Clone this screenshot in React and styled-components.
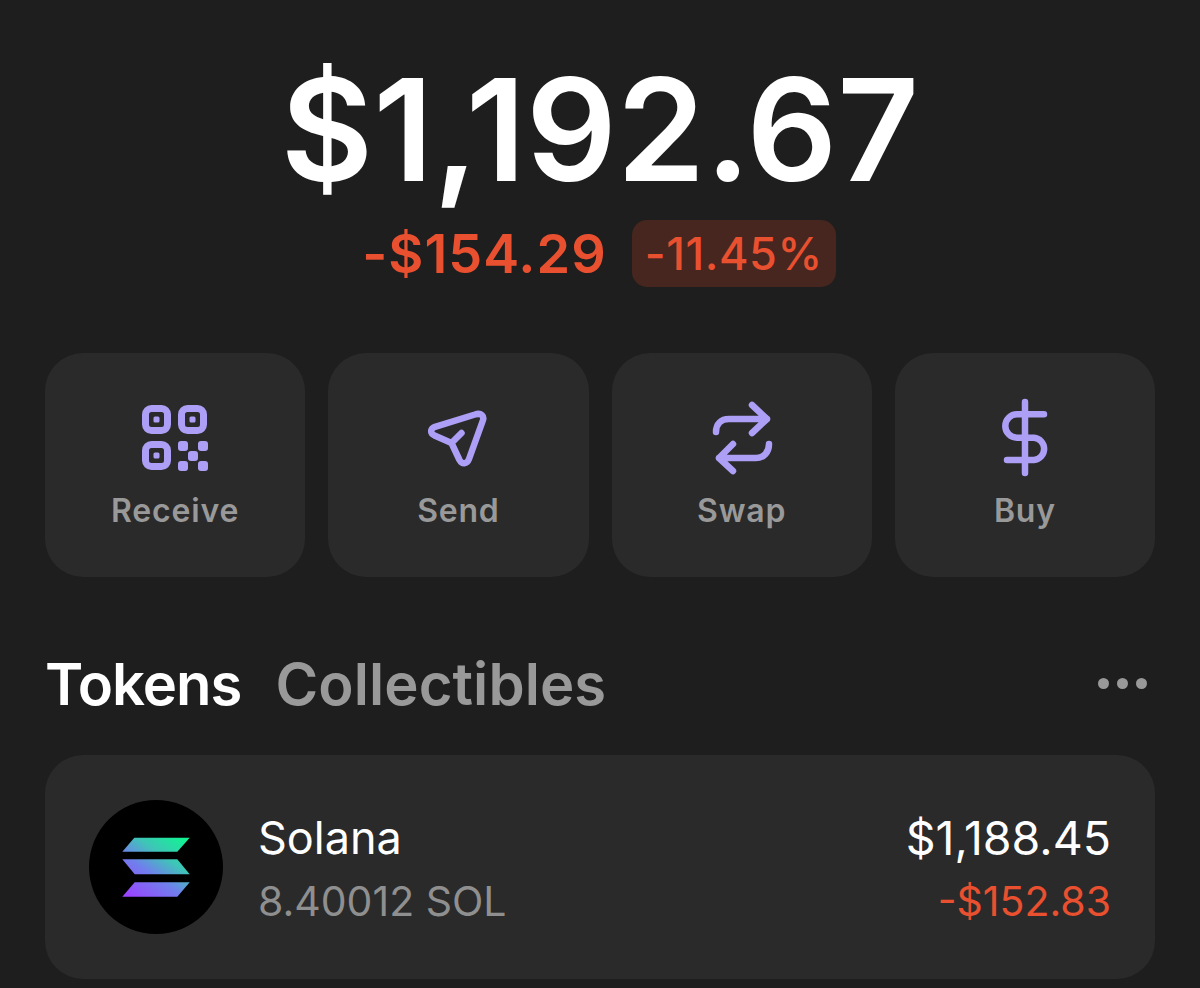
import styled, { createGlobalStyle } from "styled-components";

const GlobalStyle = createGlobalStyle`
  html, body {
    margin: 0;
    padding: 0;
    background: #1e1e1e;
  }
  * {
    box-sizing: border-box;
  }
`;

const actions = [
  { label: "Receive", icon: <QrIcon /> },
  { label: "Send", icon: <SendIcon /> },
  { label: "Swap", icon: <SwapIcon /> },
  { label: "Buy", icon: <DollarIcon /> },
];

export default function App() {
  return (
    <Page>
      <GlobalStyle />
      <Balance>$1,192.67</Balance>
      <ChangeRow>
        <ChangeAmount>-$154.29</ChangeAmount>
        <ChangeBadge>-11.45%</ChangeBadge>
      </ChangeRow>
      <Actions>
        {actions.map((action) => (
          <ActionCard key={action.label}>
            <IconSlot>{action.icon}</IconSlot>
            <ActionLabel>{action.label}</ActionLabel>
          </ActionCard>
        ))}
      </Actions>
      <TabsRow>
        <Tab $active>Tokens</Tab>
        <Tab>Collectibles</Tab>
        <MoreDots>
          <Dot />
          <Dot />
          <Dot />
        </MoreDots>
      </TabsRow>
      <TokenCard>
        <SolanaLogo />
        <TokenText>
          <TokenName>Solana</TokenName>
          <TokenSub>8.40012 SOL</TokenSub>
        </TokenText>
        <TokenValues>
          <TokenValue>$1,188.45</TokenValue>
          <TokenLoss>-$152.83</TokenLoss>
        </TokenValues>
      </TokenCard>
    </Page>
  );
}

function QrIcon() {
  return (
    <svg width="66" height="66" viewBox="0 0 66 66" fill="none">
      <g stroke="#ad9ff6" strokeWidth="7">
        <rect x="3.5" y="3.5" width="22" height="22" rx="6" />
        <rect x="39.5" y="3.5" width="22" height="22" rx="6" />
        <rect x="3.5" y="39.5" width="22" height="22" rx="6" />
      </g>
      <g fill="#ad9ff6">
        <rect x="11.5" y="11.5" width="6" height="6" rx="1.5" />
        <rect x="47.5" y="11.5" width="6" height="6" rx="1.5" />
        <rect x="11.5" y="47.5" width="6" height="6" rx="1.5" />
        <rect x="36" y="36" width="10" height="10" rx="3" />
        <rect x="56" y="36" width="10" height="10" rx="3" />
        <rect x="46" y="46" width="10" height="10" rx="3" />
        <rect x="36" y="56" width="10" height="10" rx="3" />
        <rect x="56" y="56" width="10" height="10" rx="3" />
      </g>
    </svg>
  );
}

function SendIcon() {
  return (
    <svg width="60" height="60" viewBox="0 0 60 60" fill="none">
      <path
        d="M47 6.5C53 4.5 57 8 54.5 13.5L41 51C39 56.5 34 56.5 31.5 52L23.5 35L6.5 27.5C2 25 2 21 7 18.8ZM23.5 35L33.5 25"
        stroke="#ad9ff6"
        strokeWidth="6.5"
        strokeLinecap="round"
        strokeLinejoin="round"
      />
    </svg>
  );
}

function SwapIcon() {
  return (
    <svg width="62" height="74" viewBox="0 0 62 74" fill="none">
      <path
        d="M5 31C5 23 10 18 18 18H56M41 4L56 18L41 32M58 43C58 51 53 57 45 57H8M22 43L8 57L22 70"
        stroke="#ad9ff6"
        strokeWidth="6.5"
        strokeLinecap="round"
        strokeLinejoin="round"
      />
    </svg>
  );
}

function DollarIcon() {
  return (
    <svg width="50" height="80" viewBox="0 0 50 80" fill="none">
      <path
        d="M25 4V75M44 16.3H17A11.7 11.7 0 0 0 17 39.7H34A11.2 11.2 0 0 1 34 62H7"
        stroke="#ad9ff6"
        strokeWidth="6.5"
        strokeLinecap="round"
        strokeLinejoin="round"
      />
    </svg>
  );
}

function SolanaLogo() {
  return (
    <svg width="134" height="134" viewBox="0 0 134 134" style={{ flexShrink: 0 }}>
      <defs>
        <linearGradient id="sol" gradientUnits="userSpaceOnUse" x1="44" y1="98" x2="88" y2="36">
          <stop offset="0" stopColor="#9945ff" />
          <stop offset="0.4" stopColor="#6f80ec" />
          <stop offset="0.68" stopColor="#3fc4b8" />
          <stop offset="1" stopColor="#14f195" />
        </linearGradient>
      </defs>
      <circle cx="67" cy="67" r="67" fill="#000" />
      <path
        fill="url(#sol)"
        d="M33.3 51.7L45.3 37.7H100.7L88.3 51.7ZM33.3 59.3H88.3L100.7 74.3H45.7ZM33.3 96.7L45.7 82.3H100.7L88.3 96.7Z"
      />
    </svg>
  );
}

const Page = styled.div`
  width: 1200px;
  height: 988px;
  overflow: hidden;
  padding: 0 45px;
  background: #1e1e1e;
  font-family: Inter, "Liberation Sans", sans-serif;
`;

const Balance = styled.div`
  height: 214px;
  padding-top: 42px;
  font-size: 142px;
  line-height: 174px;
  font-weight: 600;
  color: #fff;
  text-align: center;
`;

const ChangeRow = styled.div`
  display: flex;
  justify-content: center;
  align-items: center;
  gap: 25px;
  height: 67px;
  margin-top: 6px;
`;

const ChangeAmount = styled.span`
  font-size: 54px;
  font-weight: 600;
  letter-spacing: 1px;
  color: #e9502f;
`;

const ChangeBadge = styled.span`
  display: flex;
  align-items: center;
  height: 67px;
  margin-right: 2px;
  padding: 0 13px;
  border-radius: 15px;
  background: #46261f;
  font-size: 45px;
  font-weight: 500;
  letter-spacing: 0.6px;
  color: #e9502f;
`;

const Actions = styled.div`
  display: grid;
  grid-template-columns: repeat(4, 1fr);
  gap: 23px;
  margin-top: 66px;
`;

const ActionCard = styled.div`
  display: flex;
  flex-direction: column;
  align-items: center;
  height: 224px;
  padding-top: 45px;
  border-radius: 38px;
  background: #2a2a2a;
`;

const IconSlot = styled.div`
  display: flex;
  align-items: center;
  justify-content: center;
  height: 80px;
`;

const ActionLabel = styled.div`
  margin-top: 13px;
  font-size: 32px;
  line-height: 40px;
  font-weight: 600;
  letter-spacing: 0.8px;
  color: #999;
`;

const TabsRow = styled.div`
  display: flex;
  align-items: center;
  gap: 34px;
  height: 70px;
  margin-top: 72px;
`;

const Tab = styled.div`
  font-size: 58px;
  font-weight: 600;
  letter-spacing: ${(p) => (p.$active ? "-1px" : "0.1px")};
  color: ${(p) => (p.$active ? "#fff" : "#999")};
`;

const MoreDots = styled.div`
  display: flex;
  gap: 8px;
  margin-left: auto;
  margin-right: 8px;
  margin-bottom: 2px;
`;

const Dot = styled.span`
  width: 11px;
  height: 11px;
  border-radius: 50%;
  background: #999;
`;

const TokenCard = styled.div`
  display: flex;
  align-items: center;
  gap: 35px;
  height: 224px;
  margin-top: 36px;
  padding: 0 44px;
  border-radius: 38px;
  background: #2a2a2a;
`;

const TokenText = styled.div`
  display: flex;
  flex-direction: column;
  gap: 9px;
  margin-top: 5px;
`;

const TokenValues = styled(TokenText)`
  margin-left: auto;
  align-items: flex-end;
`;

const TokenName = styled.div`
  font-size: 45px;
  line-height: 54px;
  color: #fff;
`;

const TokenValue = styled(TokenName)`
  font-size: 46.5px;
`;

const TokenSub = styled.div`
  font-size: 41px;
  line-height: 54px;
  color: #8f8f8f;
`;

const TokenLoss = styled(TokenSub)`
  color: #e9502f;
`;
